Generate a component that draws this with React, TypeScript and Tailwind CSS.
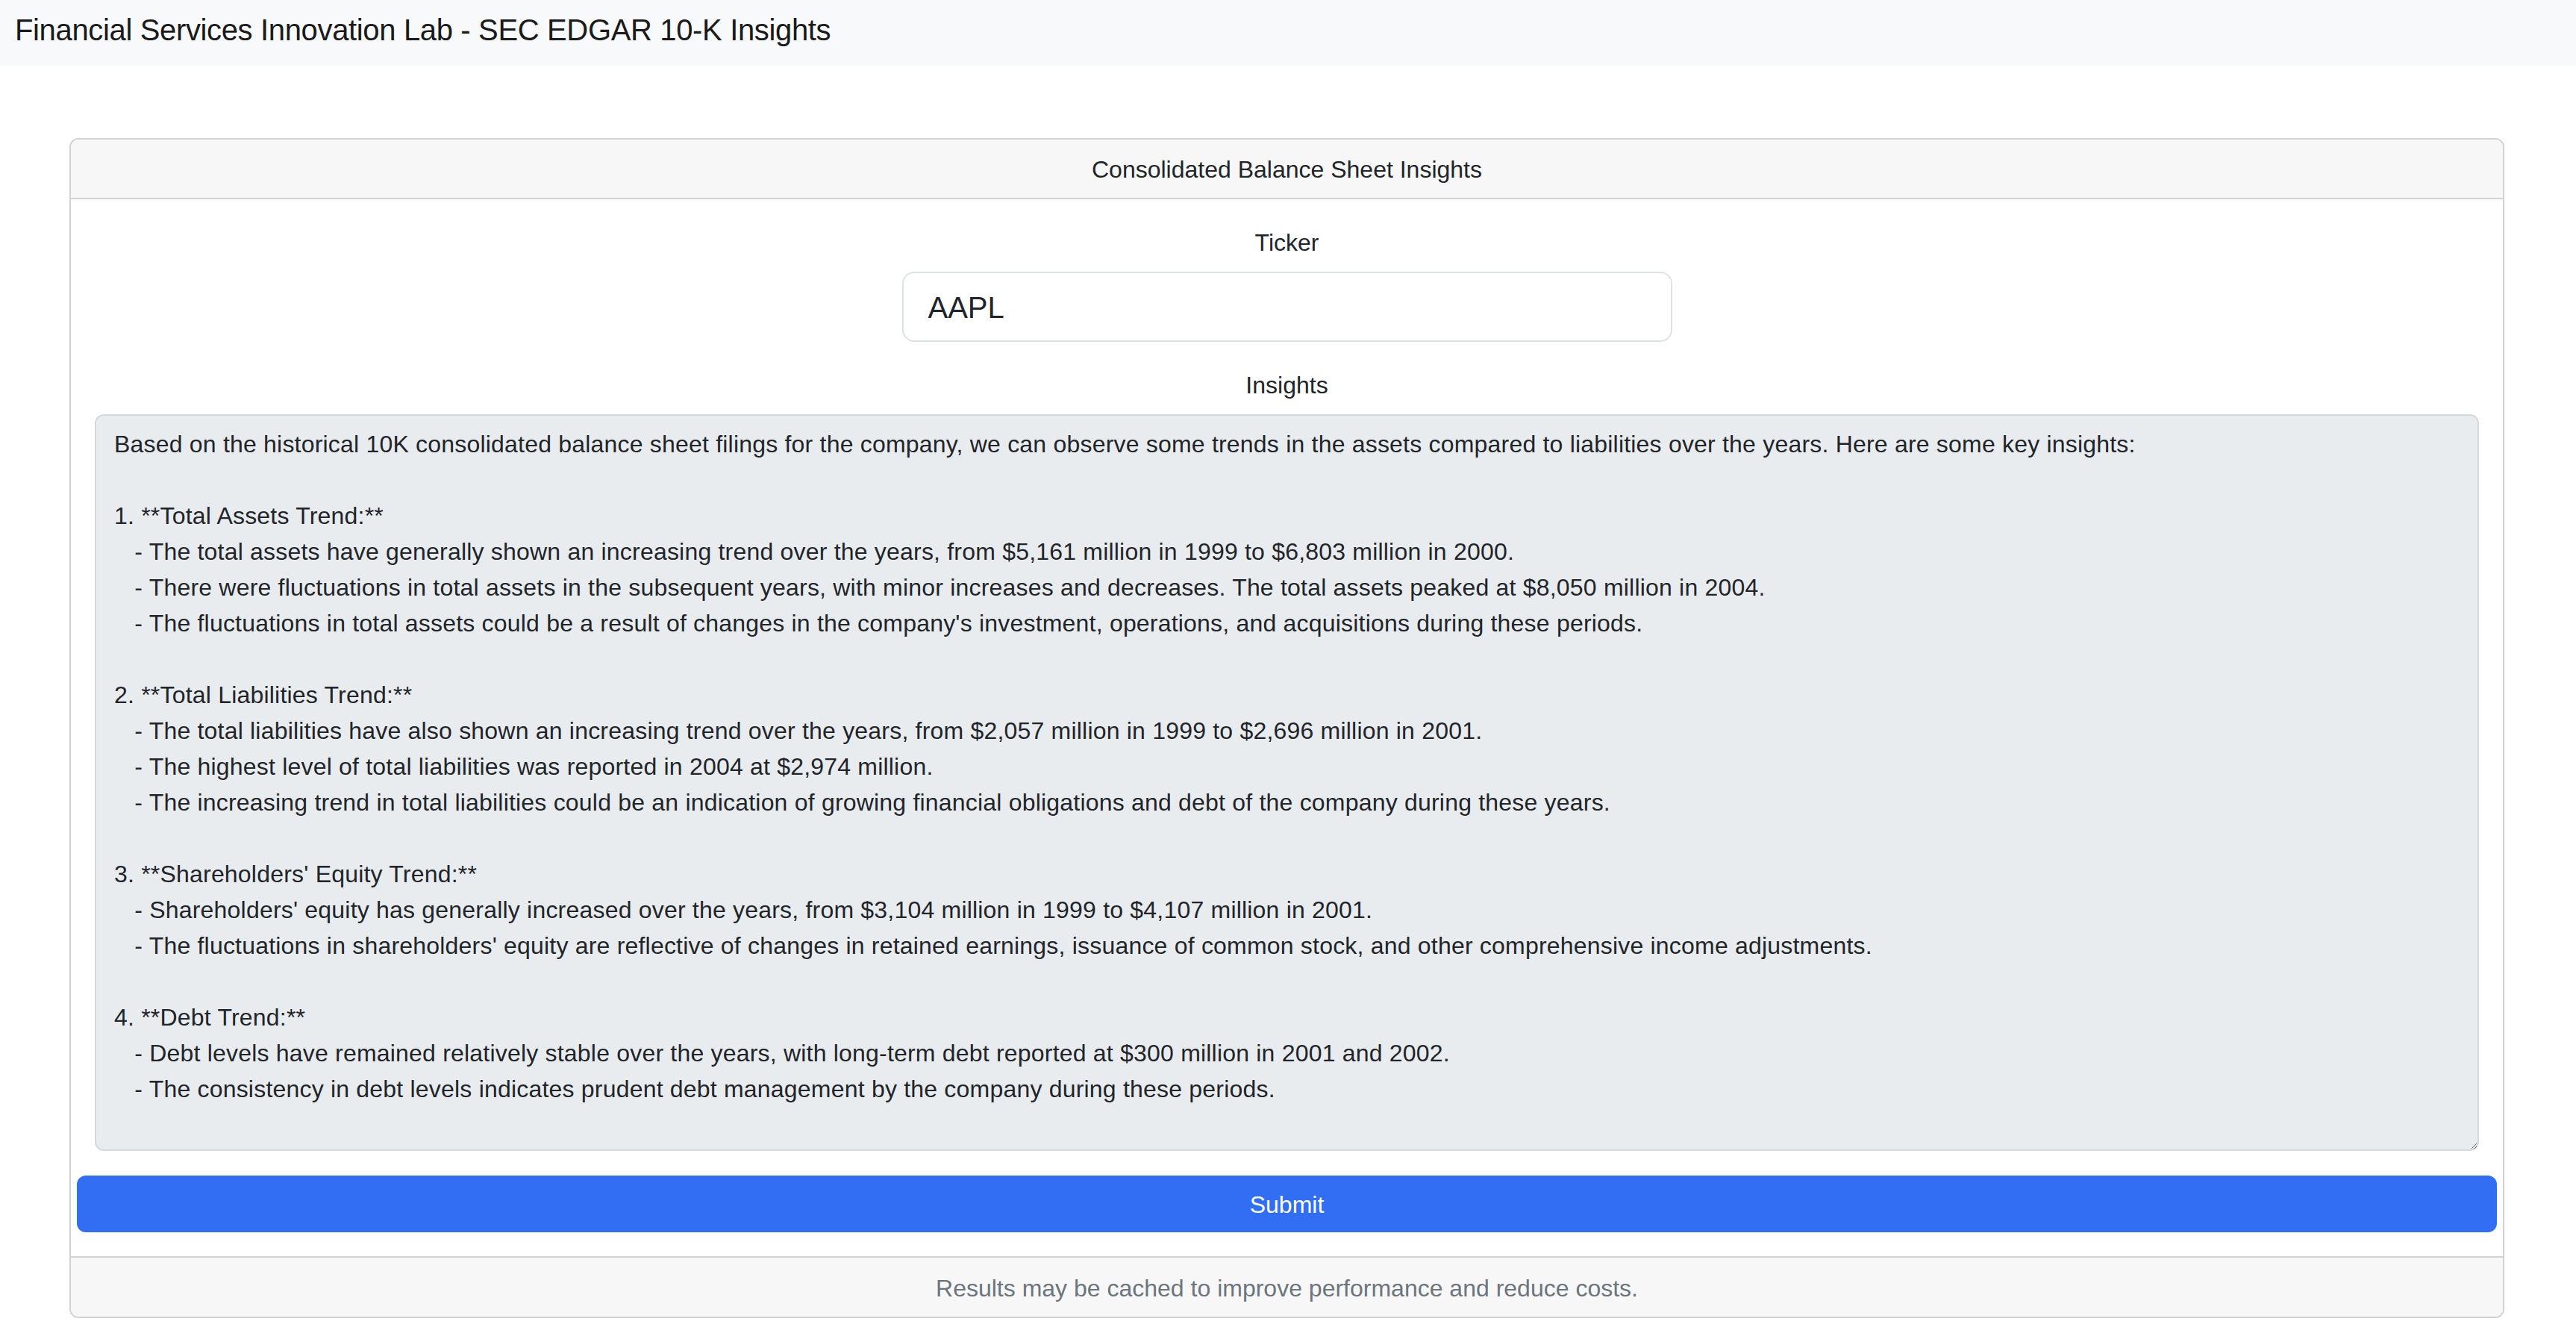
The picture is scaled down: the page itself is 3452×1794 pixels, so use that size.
import { useState } from "react";

const insightsText = `Based on the historical 10K consolidated balance sheet filings for the company, we can observe some trends in the assets compared to liabilities over the years. Here are some key insights:

1. **Total Assets Trend:**
   - The total assets have generally shown an increasing trend over the years, from $5,161 million in 1999 to $6,803 million in 2000.
   - There were fluctuations in total assets in the subsequent years, with minor increases and decreases. The total assets peaked at $8,050 million in 2004.
   - The fluctuations in total assets could be a result of changes in the company's investment, operations, and acquisitions during these periods.

2. **Total Liabilities Trend:**
   - The total liabilities have also shown an increasing trend over the years, from $2,057 million in 1999 to $2,696 million in 2001.
   - The highest level of total liabilities was reported in 2004 at $2,974 million.
   - The increasing trend in total liabilities could be an indication of growing financial obligations and debt of the company during these years.

3. **Shareholders' Equity Trend:**
   - Shareholders' equity has generally increased over the years, from $3,104 million in 1999 to $4,107 million in 2001.
   - The fluctuations in shareholders' equity are reflective of changes in retained earnings, issuance of common stock, and other comprehensive income adjustments.

4. **Debt Trend:**
   - Debt levels have remained relatively stable over the years, with long-term debt reported at $300 million in 2001 and 2002.
   - The consistency in debt levels indicates prudent debt management by the company during these periods.`;

export default function App() {
  const [ticker, setTicker] = useState("AAPL");

  return (
    <div className="min-h-screen bg-white text-[#212529] font-['Liberation_Sans',Arial,sans-serif]">
      <nav className="h-[88px] bg-[#f8f9fa] pl-[20px] pt-[17px]">
        <span className="text-[40px] leading-[46px] tracking-[-0.35px] text-[#1a1a1a]">
          Financial Services Innovation Lab - SEC EDGAR 10-K Insights
        </span>
      </nav>

      <div className="ml-[93px] mr-[96px] mt-[97px] border-2 border-[#d2d2d2] rounded-[12px] overflow-hidden">
        <div className="h-[80px] pt-[2px] bg-[#f7f7f7] border-b-2 border-[#d2d2d2] flex items-center justify-center text-[32px] leading-[48px]">
          Consolidated Balance Sheet Insights
        </div>

        <form className="px-[32px] pt-[34px] pb-[32px] flex flex-col items-center">
          <label className="text-[32px] leading-[48px] mb-[15px]">Ticker</label>
          <input
            type="text"
            value={ticker}
            onChange={(e) => setTicker(e.target.value)}
            className="w-[1032px] h-[94px] border-2 border-[#dee2e6] rounded-[16px] px-[33px] pt-[2px] text-[40px] outline-none bg-white"
          />
          <label className="text-[32px] leading-[48px] mt-[34px] mb-[15px]">Insights</label>
          <textarea
            readOnly
            spellCheck={false}
            value={insightsText}
            className="w-full h-[987px] bg-[#e9ecef] border-2 border-[#d5d9de] rounded-[12px] px-[24px] pt-[14px] pb-[10px] text-[32px] leading-[48px] tracking-[0.2px] outline-none"
          />
          <button
            type="button"
            className="self-stretch -mx-[24px] mt-[33px] h-[76px] pt-[2px] bg-[#316ef4] text-white text-[32px] rounded-[12px]"
          >
            Submit
          </button>
        </form>

        <div className="h-[81px] pt-[2px] bg-[#f7f7f7] border-t-2 border-[#d2d2d2] flex items-center justify-center text-[32px] text-[#6c757d]">
          Results may be cached to improve performance and reduce costs.
        </div>
      </div>
    </div>
  );
}
